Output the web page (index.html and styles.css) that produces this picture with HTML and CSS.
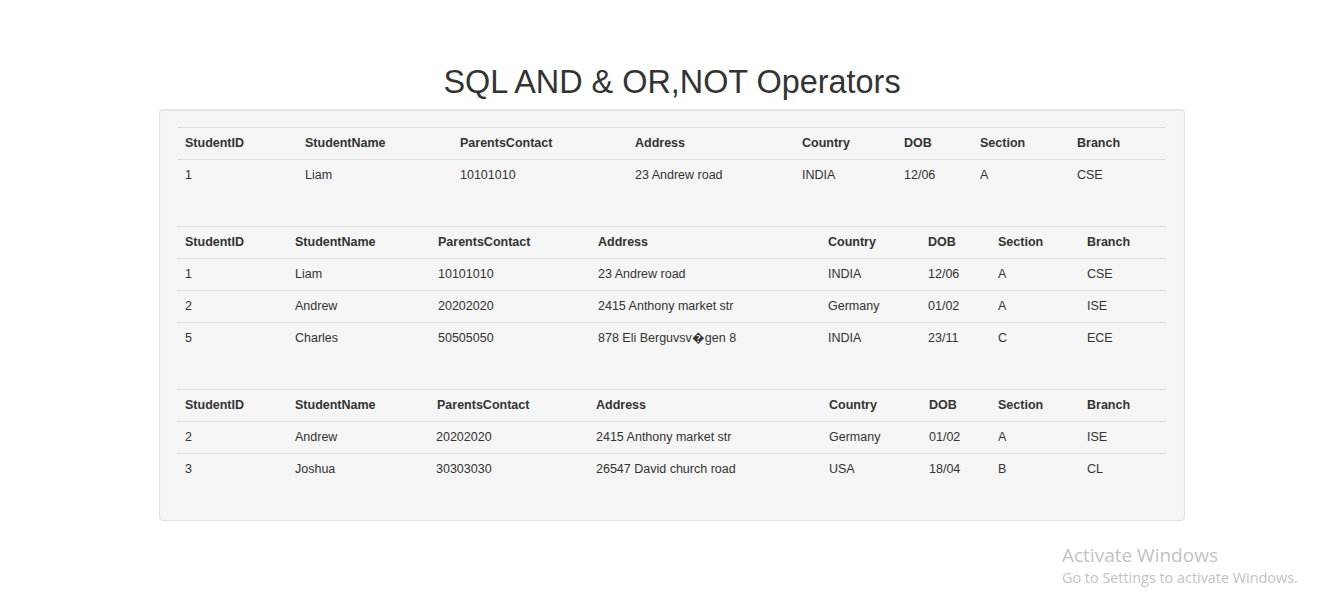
FILE: index.html
```html
<!DOCTYPE html>
<html>
<head>
<meta charset="utf-8">
<title>SQL AND &amp; OR,NOT Operators</title>
<link rel="stylesheet" href="styles.css">
</head>
<body>
<h1 class="title">SQL AND &amp; OR,NOT Operators</h1>
<div class="well">
  <table class="grid t1">
    <thead>
      <tr><th>StudentID</th><th>StudentName</th><th>ParentsContact</th><th>Address</th><th>Country</th><th>DOB</th><th>Section</th><th>Branch</th></tr>
    </thead>
    <tbody>
      <tr><td>1</td><td>Liam</td><td>10101010</td><td>23 Andrew road</td><td>INDIA</td><td>12/06</td><td>A</td><td>CSE</td></tr>
    </tbody>
  </table>
  <table class="grid t2">
    <thead>
      <tr><th>StudentID</th><th>StudentName</th><th>ParentsContact</th><th>Address</th><th>Country</th><th>DOB</th><th>Section</th><th>Branch</th></tr>
    </thead>
    <tbody>
      <tr><td>1</td><td>Liam</td><td>10101010</td><td>23 Andrew road</td><td>INDIA</td><td>12/06</td><td>A</td><td>CSE</td></tr>
      <tr><td>2</td><td>Andrew</td><td>20202020</td><td>2415 Anthony market str</td><td>Germany</td><td>01/02</td><td>A</td><td>ISE</td></tr>
      <tr><td>5</td><td>Charles</td><td>50505050</td><td>878 Eli Berguvsv&#xFFFD;gen 8</td><td>INDIA</td><td>23/11</td><td>C</td><td>ECE</td></tr>
    </tbody>
  </table>
  <table class="grid t3">
    <thead>
      <tr><th>StudentID</th><th>StudentName</th><th>ParentsContact</th><th>Address</th><th>Country</th><th>DOB</th><th>Section</th><th>Branch</th></tr>
    </thead>
    <tbody>
      <tr><td>2</td><td>Andrew</td><td>20202020</td><td>2415 Anthony market str</td><td>Germany</td><td>01/02</td><td>A</td><td>ISE</td></tr>
      <tr><td>3</td><td>Joshua</td><td>30303030</td><td>26547 David church road</td><td>USA</td><td>18/04</td><td>B</td><td>CL</td></tr>
    </tbody>
  </table>
</div>
<div class="activate">
  <div class="activate-title">Activate Windows</div>
  <div class="activate-sub">Go to Settings to activate Windows.</div>
</div>
</body>
</html>
```

FILE: styles.css
```css
html, body {
  margin: 0;
  padding: 0;
  background: #fff;
}
body {
  font-family: "Liberation Sans", Arial, sans-serif;
  font-size: 12.5px;
  color: #333;
  height: 614px;
  overflow: hidden;
  position: relative;
}
.title {
  margin: 62px 0 7px;
  font-size: 32.4px;
  line-height: 40px;
  font-weight: 500;
  text-align: center;
  color: #333;
  padding-left: 4px;
}
.well {
  box-sizing: border-box;
  width: 1026px;
  margin-left: 159px;
  background: #f5f5f5;
  border: 1px solid #e3e3e3;
  border-radius: 4px;
  box-shadow: inset 0 1px 1px rgba(0,0,0,.05);
  padding: 17px 19px 0 17px;
}
.grid {
  border-collapse: collapse;
  table-layout: fixed;
  margin-bottom: 35px;
}
.grid th, .grid td {
  box-sizing: border-box;
  text-align: left;
  padding: 6px 8px;
  line-height: 19px;
  border-top: 1px solid #ddd;
  white-space: nowrap;
  vertical-align: top;
}
.grid th { font-weight: bold; }
.t1 { width: 988px; }
.t1 th:nth-child(1) { width: 120px; }
.t1 th:nth-child(2) { width: 155px; }
.t1 th:nth-child(3) { width: 175px; }
.t1 th:nth-child(4) { width: 167px; }
.t1 th:nth-child(5) { width: 102px; }
.t1 th:nth-child(6) { width: 76px; }
.t1 th:nth-child(7) { width: 97px; }
.t1 th:nth-child(8) { width: 96px; }
.t2, .t3 { width: 989px; }
.t2 th:nth-child(1), .t3 th:nth-child(1) { width: 110px; }
.t2 th:nth-child(2) { width: 143px; }
.t3 th:nth-child(2) { width: 142px; }
.t2 th:nth-child(3), .t3 th:nth-child(3) { width: 160px; }
.t3 th:nth-child(3) { width: 159px; }
.t2 th:nth-child(4) { width: 230px; }
.t3 th:nth-child(4) { width: 233px; }
.t2 th:nth-child(5), .t3 th:nth-child(5) { width: 100px; }
.t2 th:nth-child(6) { width: 70px; }
.t3 th:nth-child(6) { width: 69px; }
.t2 th:nth-child(7), .t3 th:nth-child(7) { width: 89px; }
.t2 th:nth-child(8) { width: 87px; }
.t3 th:nth-child(8) { width: 87px; }
.t3 td:nth-child(3) { padding-left: 7px; }
.activate {
  position: absolute;
  left: 1062px;
  top: 543px;
  font-family: "Open Sans", "Noto Sans", sans-serif;
  color: #c3c3c3;
}
.activate-title {
  font-size: 19px;
  line-height: 25px;
}
.activate-sub {
  font-size: 14.4px;
  line-height: 20px;
}
```
